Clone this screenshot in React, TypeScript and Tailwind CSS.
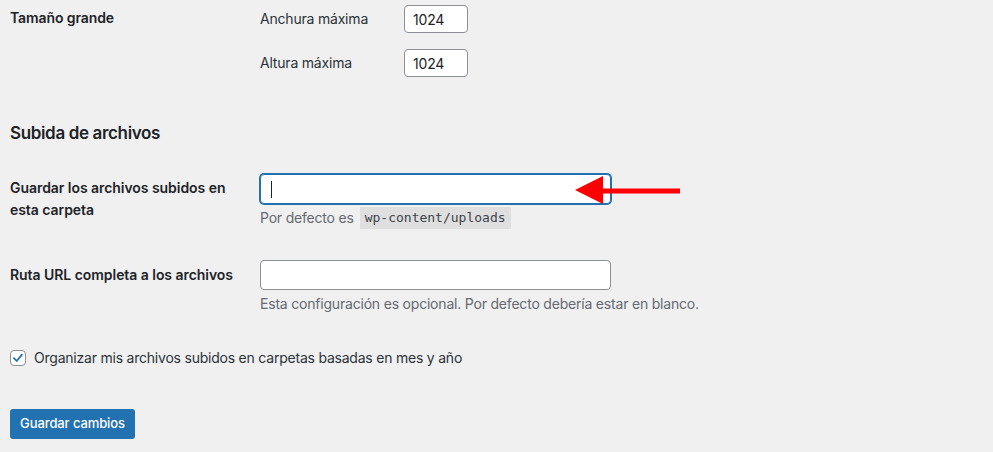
import React from "react";

export default function App() {
  return (
    <div
      className="relative min-h-[452px] w-[993px] bg-[#f0f0f1] pl-[10px] pt-[5px] text-[14px] text-[#1d2327] [font-family:Inter,'Noto_Sans',sans-serif]"
    >
      {/* Tamaño grande */}
      <div className="flex items-start">
        <div className="w-[250px] pt-[3px] text-[14px] font-semibold leading-[20px] tracking-[-0.1px]">Tamaño grande</div>
        <div className="flex flex-col gap-[16px]">
          <div className="flex h-[28px] items-center">
            <span className="w-[144px] leading-[20px] tracking-[-0.2px] text-[#2c3338]">Anchura máxima</span>
            <div className="flex h-[28px] w-[64px] items-center rounded-[4px] border border-[#8c8f94] bg-white px-[8px] text-[14px] tracking-[-0.2px]">1024</div>
          </div>
          <div className="flex h-[28px] items-center">
            <span className="w-[144px] leading-[20px] tracking-[-0.2px] text-[#2c3338]">Altura máxima</span>
            <div className="flex h-[28px] w-[64px] items-center rounded-[4px] border border-[#8c8f94] bg-white px-[8px] text-[14px] tracking-[-0.2px]">1024</div>
          </div>
        </div>
      </div>

      {/* Heading */}
      <h2 className="mt-[44px] text-[17px] font-semibold leading-[24px] tracking-[-0.35px] text-[#1d2327]">Subida de archivos</h2>

      {/* Guardar los archivos */}
      <div className="mt-[29px] flex items-start">
        <div className="w-[250px] pt-[3px] pr-[20px] font-semibold leading-[22px] tracking-[-0.05px]">
          Guardar los archivos subidos en esta carpeta
        </div>
        <div className="flex flex-col">
          <div className="flex h-[30px] w-[351px] items-center rounded-[4px] border border-[#2271b1] bg-white px-[10px] shadow-[0_0_0_1px_#2271b1]">
            <span className="block h-[17px] w-[1px] bg-[#1d2327]" />
          </div>
          <div className="mt-[3px] flex items-center leading-[22px] tracking-[-0.2px] text-[#646970]">
            <span>Por defecto es</span>
            <code className="ml-[6px] bg-[rgba(0,0,0,0.07)] px-[5px] py-[0px] text-[13px] leading-[22px] tracking-normal text-[#3c434a] [font-family:'DejaVu_Sans_Mono',monospace]">
              wp-content/uploads
            </code>
          </div>
        </div>
      </div>

      {/* Ruta URL */}
      <div className="mt-[31px] flex items-start">
        <div className="w-[250px] pt-[4px] font-semibold leading-[22px] tracking-[-0.05px]">Ruta URL completa a los archivos</div>
        <div className="flex flex-col">
          <div className="h-[30px] w-[351px] rounded-[4px] border border-[#8c8f94] bg-white" />
          <div className="mt-[3px] leading-[22px] tracking-[-0.2px] text-[#646970]">
            Esta configuración es opcional. Por defecto debería estar en blanco.
          </div>
        </div>
      </div>

      {/* Checkbox */}
      <div className="mt-[32px] flex h-[22px] items-center">
        <div className="flex h-[16px] w-[16px] items-center justify-center rounded-[4px] border border-[#8c8f94] bg-white">
          <svg width="14" height="14" viewBox="0 0 14 14">
            <path d="M3 7.2 L5.7 10 L11 3.6" fill="none" stroke="#2271b1" strokeWidth="1.8" strokeLinecap="round" strokeLinejoin="round" />
          </svg>
        </div>
        <span className="ml-[8px] leading-[22px] tracking-[-0.22px] text-[#2c3338]">Organizar mis archivos subidos en carpetas basadas en mes y año</span>
      </div>

      {/* Button */}
      <button className="mt-[40px] flex h-[30px] w-[125px] items-center justify-center rounded-[3px] bg-[#2271b1] text-[13px] font-medium tracking-[-0.1px] text-white">
        Guardar cambios
      </button>

      {/* Red arrow overlay */}
      <svg className="absolute left-[570px] top-[170px]" width="120" height="40" viewBox="0 0 120 40">
        <polygon points="5,20 33,6 33,34" fill="#ff0000" />
        <rect x="30" y="18.5" width="80" height="5" fill="#ff0000" />
      </svg>
    </div>
  );
}
